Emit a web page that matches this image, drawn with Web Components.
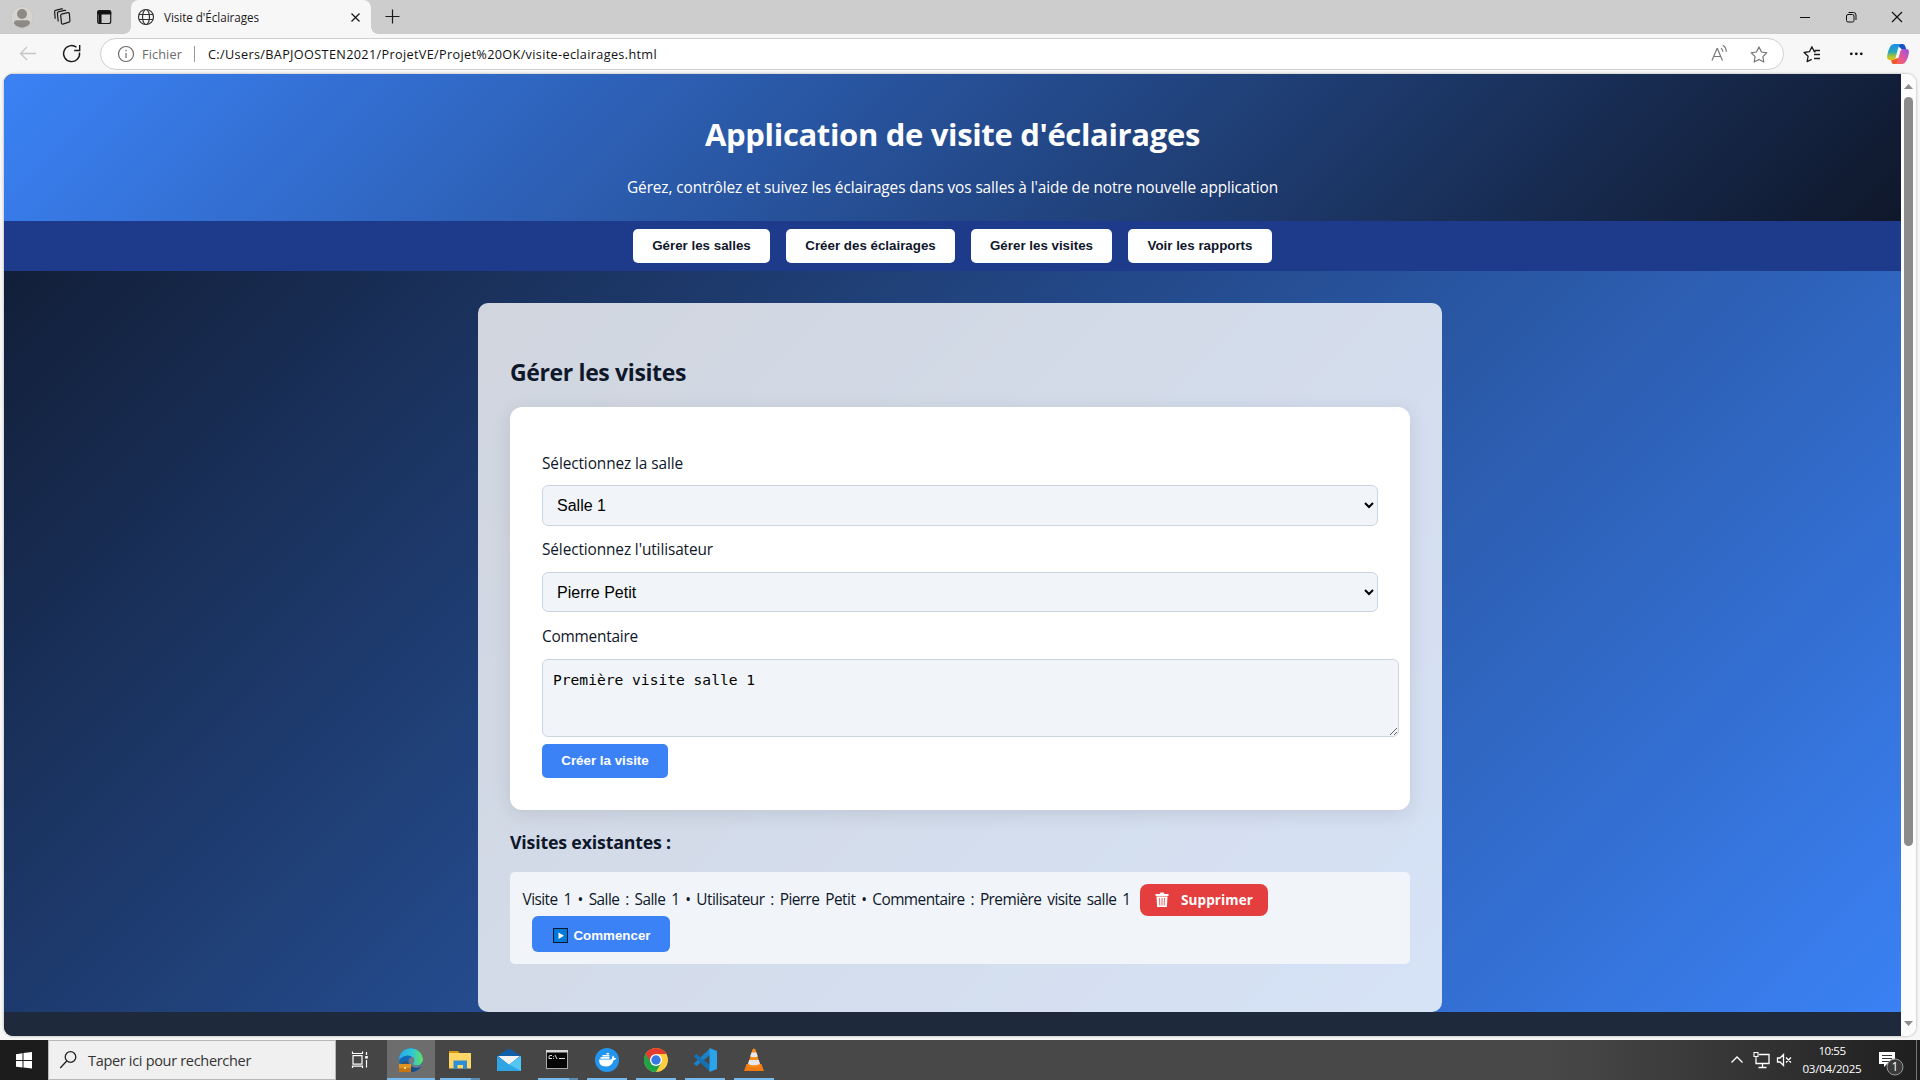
<!DOCTYPE html>
<html lang="fr">
<head>
<meta charset="utf-8">
<title>Visite d'Éclairages</title>
<style>
html,body{margin:0;height:100%;overflow:hidden}
body{font-family:"Open Sans","Noto Sans",sans-serif;background:#f7f7f7}
</style>
</head>
<body>
<desktop-screen></desktop-screen>
<script>
function define(name, html, setup) {
  const t = document.createElement('template');
  t.innerHTML = html;
  customElements.define(name, class extends HTMLElement {
    connectedCallback() {
      if (this.shadowRoot) return;
      const r = this.attachShadow({mode: 'open'});
      r.appendChild(t.content.cloneNode(true));
      if (setup) setup(this, r);
    }
  });
}

define('desktop-screen', `
<style>:host{display:flex;flex-direction:column;width:1920px;height:1080px;overflow:hidden;background:#f7f7f7}
.view{display:flex;height:962px;margin:0 4px 4px;border-radius:9px;overflow:hidden;box-shadow:0 0 3px #0005;background:#fcfcfc;flex:none}
</style>
<tab-strip></tab-strip><address-bar></address-bar>
<div class="view"><visit-page></visit-page><scroll-track></scroll-track></div>
<task-bar></task-bar>`);

define('tab-strip', `
<style>:host{display:flex;height:34px;background:#cdcdcd;flex:none;align-items:flex-start}
svg{display:block;flex:none}
.tab{position:relative;display:flex;align-items:center;width:240px;height:34px;background:#f7f7f7;border-radius:8px 8px 0 0;font-size:11.700px;line-height:20px;color:#1b1b1b}
.tab:before,.tab:after{content:"";position:absolute;bottom:0;width:7px;height:7px}
.tab:before{left:-7px;background:radial-gradient(circle at 0 0,#cdcdcd 6.5px,#f7f7f7 7px)}
.tab:after{right:-7px;background:radial-gradient(circle at 100% 0,#cdcdcd 6.5px,#f7f7f7 7px)}
.sp{flex:1}
</style>
<svg width="131" height="34" viewBox="0 0 131 34" fill="none" stroke="#1b1b1b" stroke-width="1.2" stroke-linejoin="round">
<circle cx="22" cy="17.5" r="11" fill="#d6d4d1" stroke="#c3c1be" stroke-width=".6"/><circle cx="22" cy="14" r="5" fill="#8d8a86" stroke="none"/><path d="M14 23.5q0-3.3 3-3.3h10q3 0 3 3.3a9.800 9.800 0 0 1-16 0z" fill="#8d8a86" stroke="none"/>
<path d="M61.500 14.200l6.300-1.500q1.200-.2 1.600.9l.5 7.300q0 .9-.9 1.200l-6.200 2q-1 .2-1.300-.7l-.8-8q0-.9.800-1.200z"/><path d="M58.200 21.500l-.8-8.300q0-1.100.9-1.400l6.200-1.400q1-.2 1.400.6M55.200 18.800l-.6-7.200q0-1 .9-1.300l6-1.400q.9-.2 1.300.4"/>
<rect x="97.700" y="10.700" width="13" height="12.800" rx="2"/><path d="M97.700 14v-1.300q0-2 2-2h9q2 0 2 2V14z" fill="#111"/><path d="M98.500 13v8.500q0 1 1 1.500h2V13z" fill="#111" stroke="none"/></svg>
<div class="tab">
<svg width="33" height="34" fill="none" stroke="#333" stroke-width="1.200"><circle cx="15" cy="17" r="7.500"/><ellipse cx="15" cy="17" rx="3.500" ry="7.500"/><path d="M8 14.500h14M8 19.500h14"/></svg>
<text-run w="95">Visite d'Éclairages</text-run><span class="sp"></span>
<svg width="24" height="34" stroke="#1b1b1b" stroke-width="1.300"><path d="M4.500 13.500l8 8M12.500 13.500l-8 8"/></svg></div>
<svg width="40" height="34" stroke="#1b1b1b" stroke-width="1.200"><path d="M21.500 9.500v14M14.500 16.500h14"/></svg>
<span class="sp"></span>
<svg width="130" height="34" fill="none" stroke="#111" stroke-width="1"><path d="M10 17.500h10"/><rect x="56.500" y="14.500" width="7.500" height="7.500" rx="1.500"/><path d="M58.500 12.500h5q2.500 0 2.500 2.500v5"/><path d="M102 12l10 10M112 12l-10 10" stroke-width="1.200"/></svg>`);

define('address-bar', `
<style>:host{display:flex;height:40px;flex:none;align-items:flex-start}
svg{display:block;flex:none}
.pill{display:flex;align-items:center;box-sizing:border-box;width:1684px;height:32px;margin-top:4px;background:#fff;border:1px solid #cfcfcf;border-radius:16px;font-size:12.700px;line-height:20px;color:#111;margin-left:0}
.g{color:#6b6b6b}.bar{width:1px;height:16px;background:#999;margin:0 13px 0 12px}.sp{flex:1}
</style>
<svg width="100" height="40" fill="none" stroke-width="1.300"><path d="M36 19.500H20.500M27 13l-6.500 6.500L27 26" stroke="#c4c4c4"/><path d="M79.500 18.500a8 8 0 1 1-3-5.200M79.700 11v5.500h-5.500" stroke="#1b1b1b" stroke-width="1.400"/></svg>
<div class="pill"><svg width="41" height="30" fill="none" stroke="#6b6b6b" stroke-width="1.200"><circle cx="25" cy="15" r="7.500"/><path d="M25 14v5M25 10.800v1.500"/></svg>
<text-run class="g" w="40">Fichier</text-run><span class="bar"></span><text-run w="449">C:/Users/BAPJOOSTEN2021/ProjetVE/Projet%20OK/visite-eclairages.html</text-run><span class="sp"></span>
<svg width="83" height="30" fill="none" stroke="#777" stroke-width="1.200"><path d="M12 21.500l5-12h.4l5 12M13.700 17.500h7M21 9.200q1.700 1.200 1.900 3.500M22.700 6.200q3.600 2 3.600 6.500"/><path d="M59 8l2.500 5 5.300.8-3.900 3.800.9 5.400-4.800-2.500-4.800 2.500.9-5.400-3.900-3.800 5.300-.8z" stroke-linejoin="round"/></svg></div>
<svg width="136" height="40" fill="none" stroke="#1b1b1b" stroke-width="1.300"><path d="M31.500 18l-1.200-.3-2.400-4.900-2.400 4.900-5.400.8 4 3.800-1 5.400 4.600-2.400M30.500 16.500h5.500M30 20.500h6M30 24.500h6" stroke-linejoin="round"/><g fill="#111" stroke="none"><circle cx="67.300" cy="19.800" r="1.400"/><circle cx="72.300" cy="19.800" r="1.400"/><circle cx="77.300" cy="19.800" r="1.400"/></g>
<defs><linearGradient id="a" x1="0" y1="0" x2="0" y2="1"><stop offset="0" stop-color="#1590ee"/><stop offset=".5" stop-color="#2ba6b8"/><stop offset=".75" stop-color="#9cc53b"/><stop offset="1" stop-color="#f4c00f"/></linearGradient><linearGradient id="b" x1="1" y1="0" x2="0" y2="1"><stop offset="0" stop-color="#8f55e8"/><stop offset=".5" stop-color="#df559f"/><stop offset="1" stop-color="#ff6a45"/></linearGradient></defs>
<g stroke="none"><path d="M112 10h6.500q2 0 2.600 1.800L122.500 16h-4z" fill="#1450c8"/><path d="M109 30h6l3-7-7 2h-4l.6 3q.4 2 1.400 2z" fill="#f2562d"/><path d="M110 10h7q-2 1-2.700 3.500L111.500 24q-.6 2-2.600 2h-3q-3.200 0-2.800-4 .6-5 3.100-9.500 1.300-2.500 3.800-2.500z" fill="url(#a)"/><path d="M118 30h-7q2-1 2.700-3.500L116.500 17q.6-2 2.600-2H122q3.500 0 2.900 4-.7 5-3.100 8.500-1.300 2.500-3.800 2.500z" fill="url(#b)"/></g></svg>`);

/* Sets one line of text at a given advance width. */
define('text-run', `<style>:host{display:inline-block;white-space:pre;flex:none}span{display:inline-block}</style><span><slot></slot></span>`);

define('scroll-track', `
<style>:host{display:flex;flex-direction:column;align-items:center;width:15px;background:#fcfcfc;flex:none}
i{display:block;width:9px;height:749px;border-radius:5px;background:#8b8b8b}.sp{flex:1}svg{display:block}</style>
<svg width="15" height="23"><path d="M3 15l4.500-5 4.500 5z" fill="#8b8b8b"/></svg><i></i><span class="sp"></span><svg width="15" height="24"><path d="M3 9l4.500 5L12 9z" fill="#8b8b8b"/></svg>`);

define('visit-page', `
<style>:host{display:flex;flex-direction:column;width:1897px;height:962px;flex:none;background:linear-gradient(135deg,#0f172a,#3b82f6);color:#0f172a;font-size:15.400px;line-height:24px}
.card{box-sizing:border-box;width:964px;height:709px;margin:32px 0 0 474px;padding:54px 32px 0;background:rgba(255,255,255,.8);border-radius:10px;flex:none}
h2{margin:0 0 20px;font-size:23px;line-height:30px}
h3{margin:20px 0 18px;font-size:17.800px;line-height:24px}
footer{height:24px;background:#1e293b;flex:none}
</style>
<site-header></site-header>
<site-nav></site-nav>
<div class="card"><h2><text-run w="176">Gérer les visites</text-run></h2>
<visit-form></visit-form>
<h3><text-run w="161">Visites existantes :</text-run></h3>
<visit-item></visit-item></div>
<footer></footer>`);

define('site-header', `
<style>:host{display:flex;flex-direction:column;align-items:center;box-sizing:border-box;height:147px;padding-top:40px;flex:none;background:linear-gradient(135deg,#3b82f6,#0f172a);color:#fff}
h1{margin:0 0 22px;font-size:31px;line-height:40px}p{margin:0;line-height:24px}</style>
<h1><text-run w="495">Application de visite d'éclairages</text-run></h1><p><text-run w="651">Gérez, contrôlez et suivez les éclairages dans vos salles à l'aide de notre nouvelle application</text-run></p>`);

define('site-nav', `
<style>:host{display:flex;justify-content:center;align-items:center;gap:16px;height:50px;flex:none;background:#1e3a8a}</style>
<push-button style="width:137px">Gérer les salles</push-button><push-button style="width:169px">Créer des éclairages</push-button><push-button style="width:141px">Gérer les visites</push-button><push-button style="width:144px">Voir les rapports</push-button>`);

define('push-button', `
<style>:host{display:flex;align-items:center;justify-content:center;height:34px;box-sizing:border-box;border-radius:5px;background:#fff;color:#0f172a;font:bold 13.333px/16px "Liberation Sans",Arial,sans-serif;white-space:nowrap;flex:none}
:host([primary]){background:#3b82f6;color:#fff}</style><slot></slot>`);

define('visit-form', `
<style>:host{display:flex;flex-direction:column;box-sizing:border-box;height:403px;padding:32px;border-radius:12px;background:#fff;box-shadow:0 4px 20px rgba(0,0,0,.1)}
label{display:block;box-sizing:border-box;height:46px;padding-top:13px;flex:none}
.l2{padding-top:12px}.l3{height:47px}
select,textarea{box-sizing:border-box;margin:0;border:1px solid #cbd5e1;border-radius:6px;background:#f1f5f9;color:#000;flex:none}
select{height:41px;width:836px;padding:10px;font:16px "Liberation Sans",Arial,sans-serif}
.s2{height:40px}
textarea{width:857px;height:78px;padding:10px;font:14.600px/19px "DejaVu Sans Mono",monospace;resize:both;margin-bottom:7px}
</style>
<label><text-run w="141">Sélectionnez la salle</text-run></label>
<select><option>Salle 1</option></select>
<label class="l2"><text-run w="171">Sélectionnez l'utilisateur</text-run></label>
<select class="s2"><option>Pierre Petit</option></select>
<label class="l3"><text-run w="96">Commentaire</text-run></label>
<textarea spellcheck="false">Première visite salle 1</textarea>
<push-button primary style="width:126px">Créer la visite</push-button>`);

define('visit-item', `
<style>:host{display:flex;flex-direction:column;align-items:flex-start;box-sizing:border-box;height:92px;padding:12px 12px 12px 12.500px;border-radius:5px;background:#f1f5f9}
.row{display:flex;align-items:center;height:32px}
.row>text-run{word-spacing:2.400px}
.del{display:flex;align-items:center;width:128px;height:32px;margin-left:9.500px;border-radius:8px;background:#e53e3e;color:#fff;font-weight:bold;font-size:13.500px}
.go{height:36px;width:138px;margin-left:9.500px;border-radius:6px;padding:3px 0 0 1px}
svg{display:block;flex:none}</style>
<div class="row"><text-run w="608">Visite 1 • Salle : Salle 1 • Utilisateur : Pierre Petit • Commentaire : Première visite salle 1</text-run>
<div class="del"><svg width="41" height="32"><path d="M15.500 10h4l1-1.500h3l1 1.500h4v2h-13z" fill="#fff"/><path d="M16.500 12.500h11l-.6 10.500h-9.800z" fill="#fff"/><path d="M19.500 14l.3 7.500M22 14v7.500M24.500 14l-.3 7.500" stroke="#e53e3e" stroke-width=".8"/></svg><text-run w="72">Supprimer</text-run></div></div>
<push-button primary class="go"><svg width="21" height="16"><rect x=".500" y=".500" width="14" height="14" fill="#0078d7" stroke="#10182b"/><path d="M5.500 4.500v6.500l5.500-3.200z" fill="#fff"/></svg><text-run w="77">Commencer</text-run></push-button>`);

define('task-app', `
<style>:host{display:flex;flex-direction:column;align-items:center;width:48px;height:40px;margin-right:1px;flex:none}
:host([active]){background:#6d6d6d}
.i{display:flex;height:38px}.u{display:flex;width:40px;height:2px}
:host([active]) .u{width:48px}
:host([open]) .u,:host([active]) .u{background:#76b9ed}
:host([multi]) .u{background:linear-gradient(90deg,#76b9ed 31px,#5b8bb3 31px)}</style>
<div class="i"><slot></slot></div><div class="u"></div>`);

define('task-bar', `
<style>:host{display:flex;width:1920px;height:40px;flex:none;background:linear-gradient(90deg,#444 0,#484848 900px,#484848 1550px,#333 1760px,#1e1e1e 1920px);color:#fff}
svg{display:block;flex:none}.start{background:#1c1c1c}
.search{display:flex;box-sizing:border-box;width:288px;height:40px;background:#f0f0f0;border:1px solid #b8b8b8;color:#333;font-size:14.500px;line-height:40px}
.sp{flex:1}.clock{display:flex;flex-direction:column;align-items:center;width:66px;font-size:11.600px;line-height:18px;padding-top:2px}
</style>
<svg class="start" width="48" height="40" fill="#fff"><path d="M16 14.200l6.500-.9V20H16zM23.500 13.100L32 12v8h-8.500zM16 21h6.500v6.500l-6.500-.8zM23.500 21H32v7.500l-8.500-1z"/></svg>
<div class="search"><svg width="39" height="38" fill="none" stroke="#222" stroke-width="1.300"><circle cx="21.500" cy="16" r="5.300"/><path d="M17.700 20l-6.500 7"/></svg><text-run w="163">Taper ici pour rechercher</text-run></div>
<svg width="51" height="40" fill="none" stroke="#fff" stroke-width="1.200"><rect x="17" y="15.600" width="9" height="8.500"/><path d="M16.500 11.500v2h10v-2M16.500 28v-1.800h10V28M30.500 12v3M30.500 20v7.500"/><rect x="29.200" y="16" width="2.600" height="2.600" fill="#fff" stroke="none"/></svg>
<task-app active><svg width="24" height="38" viewBox="0 0 24 38"><defs><linearGradient id="e" x1="0" y1="0" x2="1" y2="0"><stop stop-color="#28a9e8"/><stop offset=".55" stop-color="#31c7d5"/><stop offset="1" stop-color="#65df5c"/></linearGradient></defs><circle cx="12" cy="20" r="11.800" fill="#1268b8"/><path d="M0 20C0 5 22 4 24 19c0 5-4 7-8 6.500-2.500-.4-2.500-1.500-1.500-3C16.500 18 11 14 6 16q-4.500 1.500-6 4z" fill="url(#e)"/><path d="M9.500 20q1-3 4.500-3 2.500 2.500.5 5.500-1 1.500.5 2.500 5 2 8.500-1.500-2 4.500-6 5-7 0-8-8.500z" fill="#727a82"/><path d="M10 24q4 5.500 12 3-4 5-10 5-4-3-2-8z" fill="#134d8e"/><path d="M0 24h12v8H0z" fill="#c77413"/><path d="M0 24h12v4H0z" fill="#e19221"/><path d="M4 24v-1.800h4V24" fill="none" stroke="#68400e"/><path d="M5 27h2v2H5z" fill="#ffd867"/></svg></task-app>
<task-app open multi><svg width="24" height="38"><path d="M1 11h9l2 2.500H1z" fill="#d69a13"/><path d="M1 13h22v15.500H1z" fill="#ffd766"/><path d="M5.500 20.500h13.500v8.500h-4v-4H9.500v4h-4z" fill="#2e8fd6"/></svg></task-app>
<task-app><svg width="24" height="38"><path d="M0 16l12-7.500L24 16v5H0z" fill="#0f5fa9"/><path d="M1 16h22L12 25z" fill="#f3f3f3"/><path d="M0 16l12 8.500L24 16v15H0z" fill="#2fa5e6"/><path d="M24 16v15L12 24.500z" fill="#50c7f4"/></svg></task-app>
<task-app open multi><svg width="24" height="38"><rect x=".500" y="10.500" width="21" height="18" fill="#060606" stroke="#a9a9a9"/><path d="M0 10h22v2.500H0z" fill="#d8d8d8"/><path d="M6 15.500H4q-1 0-1 1.500v1.500h3M7.500 16v.8M7.500 18v.8M9 15l2 4M13 18.500h6" stroke="#ddd" fill="none"/></svg></task-app>
<task-app open><svg width="24" height="38"><circle cx="12" cy="20" r="12" fill="#2395ee"/><path d="M4 19.500h12q1.500-.2 1-2.500l1-1.500q1.200 1 1.300 2.500h2q-.5 2-2.700 2.200Q17 26.500 10.500 26.500 4 26.500 4 19.500zM5.500 17h9v1.800h-9zM7.500 15h7v1.600h-7zM11.500 13h2.500v1.600h-2.500z" fill="#fff"/></svg></task-app>
<task-app open><svg width="24" height="38"><circle cx="12" cy="20" r="12" fill="#ffcd40"/><path d="M1.600 14A12 12 0 0 0 12 32l5.200-9L12 20z" fill="#1ea446"/><path d="M1.600 14A12 12 0 0 1 22.400 14H12v6l-5.200 3z" fill="#e33b2e"/><path d="M1.600 14l5.200 9 2 3-3.500 2A12 12 0 0 1 1.600 14z" fill="#1ea446"/><circle cx="12" cy="20" r="6" fill="#fff"/><circle cx="12" cy="20" r="4.700" fill="#3779e3"/></svg></task-app>
<task-app open><svg width="24" height="38"><path d="M17 8.500V15L3.500 26 .5 23.800z" fill="#1b83c9"/><path d="M17 31.500V25L3.500 14 .5 16.200z" fill="#1571b4"/><path d="M16.500 8l7.500 3v18l-7.500 3z" fill="#2ba3ea"/></svg></task-app>
<task-app open><svg width="24" height="38"><path d="M4.500 24h15l2.500 7H2z" fill="#f07b12"/><path d="M12 8.500q1.300 0 1.700 1.500L18.500 26q-6.500 3-13 0L10.300 10q.4-1.500 1.700-1.500z" fill="#f58a1f"/><path d="M9.500 12.500h5l1.300 4q-3.700 1.500-7.600 0zM7.200 20h9.600l1.200 4q-6 2.500-12 0z" fill="#e8e8e8"/></svg></task-app>
<span class="sp"></span>
<svg width="76" height="40" fill="none" stroke="#fff" stroke-width="1.300"><path d="M8.500 22.500L14 17l5.500 5.500"/><path d="M36 14.500h10v9H33v-4.500M39.500 24v3M35.500 27.500h8" /><path d="M31 12.500h4v4h-4zM33 16.500V19" stroke-width="1.100"/><path d="M54.500 18h2.500l3.500-3.500v11L57 22h-2.500zM63 17.500l5 5M68 17.500l-5 5"/></svg>
<div class="clock"><text-run w="27">10:55</text-run><text-run w="59">03/04/2025</text-run></div>
<svg width="55" height="40" viewBox="0 0 55 40"><path d="M14 12h16v12h-8l-3 3v-3h-5z" fill="#fff"/><path d="M17 15.500h10M17 18.500h10M17 21.500h7" stroke="#333"/><circle cx="30" cy="27" r="8" fill="#3a3a3a" stroke="#999"/><text x="30" y="31" text-anchor="middle" font-size="12" fill="#fff">1</text><path d="M51.500 0v40" stroke="#777"/></svg>`);

function fitRuns(root) {
  for (const el of root.querySelectorAll('*')) {
    if (el.localName === 'text-run') {
      const s = el.shadowRoot.querySelector('span'), w = +el.getAttribute('w');
      const n = el.textContent.length;
      s.style.letterSpacing = ((w - s.getBoundingClientRect().width) / n).toFixed(4) + 'px';
      el.style.width = w + 'px';
    }
    if (el.shadowRoot) fitRuns(el.shadowRoot);
  }
}
fitRuns(document);
</script>
</body>
</html>
